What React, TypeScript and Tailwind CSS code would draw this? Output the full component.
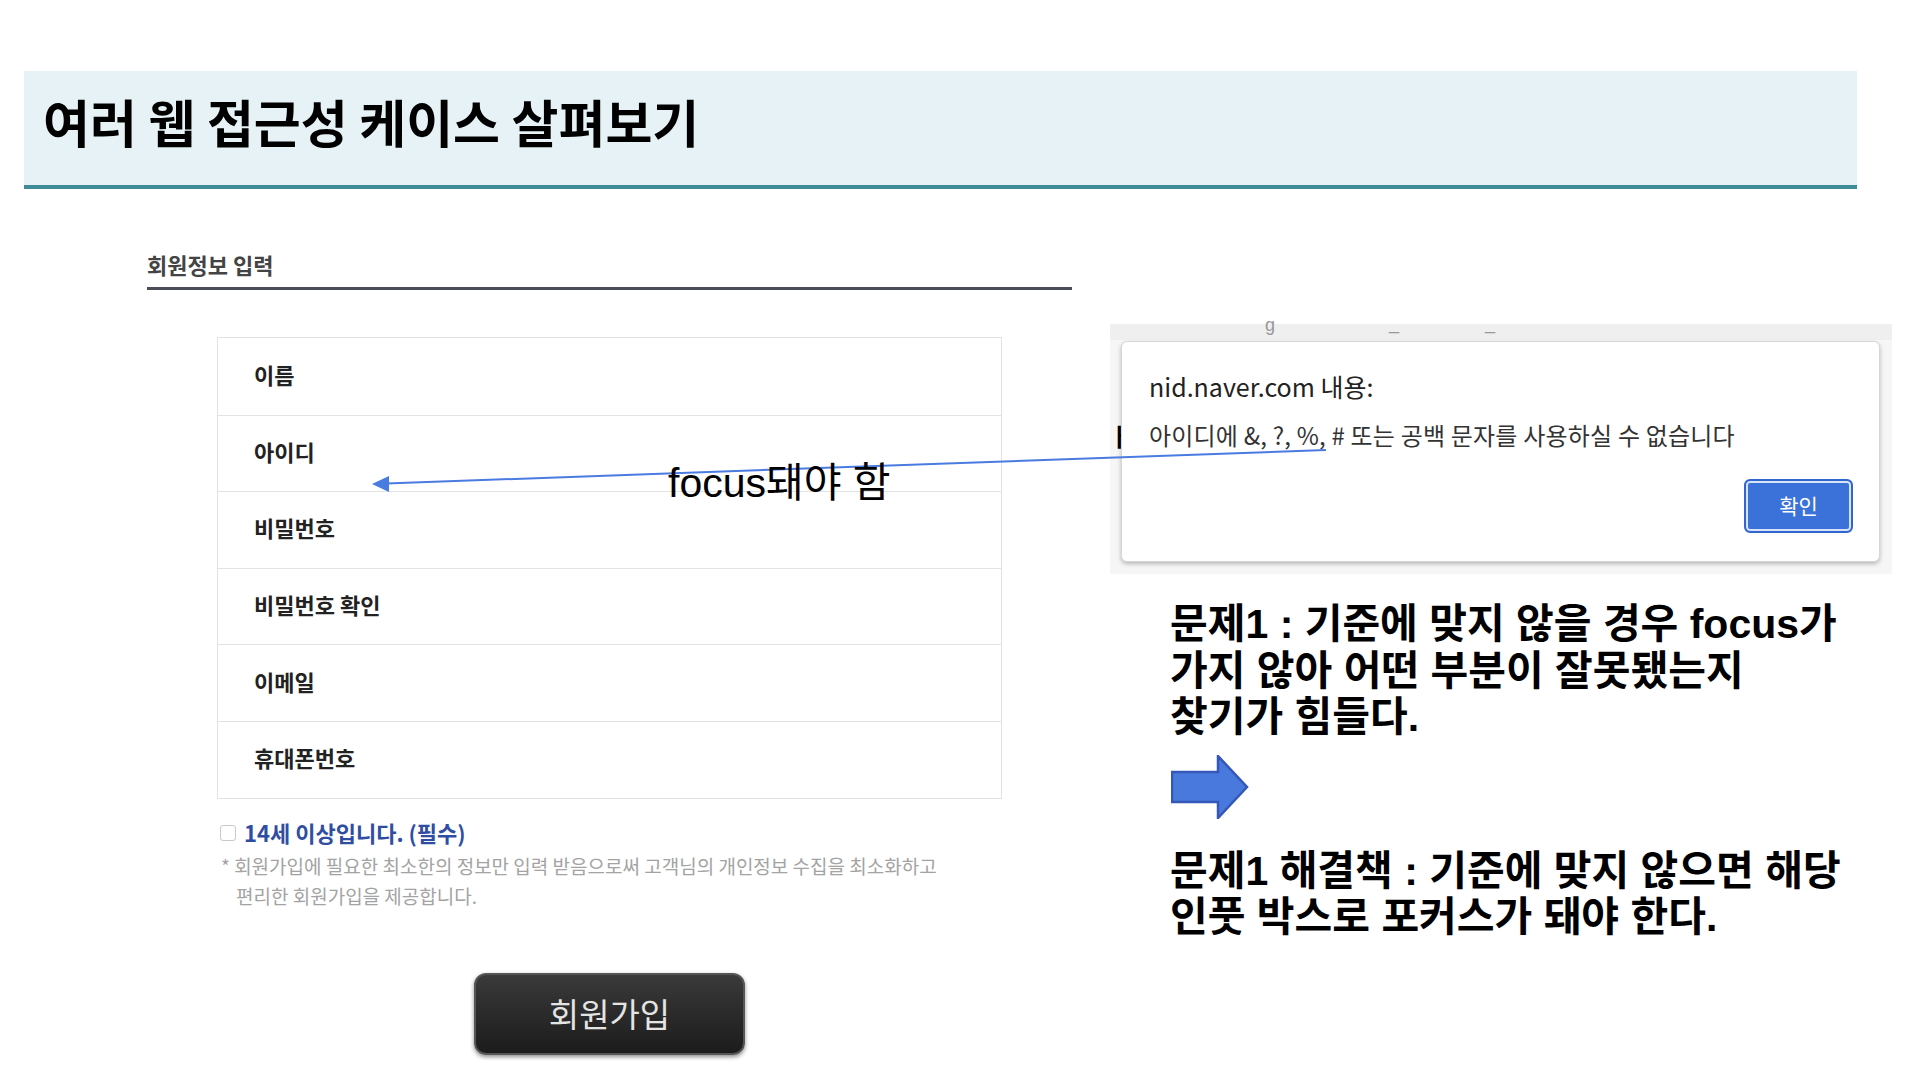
import React from 'react';

const fields = ['이름', '아이디', '비밀번호', '비밀번호 확인', '이메일', '휴대폰번호'];

const sans = "font-['Liberation_Sans','Noto_Sans_CJK_KR',sans-serif]";
const cjk = "font-['Noto_Sans_CJK_KR',sans-serif]";

export default function App() {
  return (
    <div className={`relative w-[1916px] h-[1072px] overflow-hidden bg-white ${sans}`}>
      {/* slide title */}
      <div className="mt-[71px] ml-[24px] w-[1833px] h-[118px] bg-[#e6f2f5] border-b-4 border-[#3f8c98] pl-[19px] pt-[21px]">
        <h1 className={`${cjk} text-[51px] leading-[58px] font-bold text-black`}>
          여러 웹 접근성 케이스 살펴보기
        </h1>
      </div>

      <div className="flex">
        {/* left: signup form capture */}
        <div className={`ml-[147px] w-[925px] ${cjk}`}>
          <div className="pt-[60px] pb-[8px] border-b-[3px] border-[#4b4e58]">
            <h2 className="text-[22px] leading-[30px] font-bold text-[#444]">회원정보 입력</h2>
          </div>

          <div className="ml-[70px] w-[785px]">
            <ul className="mt-[47px] border border-[#e3e3e5]">
              {fields.map((f, i) => (
                <li
                  key={f}
                  className={`h-[76.6px] flex items-center pl-[36px] pb-[4px] ${i > 0 ? 'border-t border-[#e3e3e5]' : ''}`}
                >
                  <span className="text-[22px] font-bold text-[#222]">{f}</span>
                </li>
              ))}
            </ul>

            <label className="mt-[19px] flex items-center h-[30px]">
              <span className="ml-[3px] w-[16px] h-[16px] border border-[#c9c9c9] rounded-[3px] bg-white" />
              <span className="ml-[8px] text-[22px] font-bold text-[#2f4ea3]">
                14세 이상입니다. (필수)
              </span>
            </label>

            <div className="mt-[3px] text-[19px] leading-[30px] text-[#a3a3a3]">
              <p className="ml-[4px]">* 회원가입에 필요한 최소한의 정보만 입력 받음으로써 고객님의 개인정보 수집을 최소화하고</p>
              <p className="ml-[19px]">편리한 회원가입을 제공합니다.</p>
            </div>

            <div className="mt-[62px] flex justify-center">
              <button className="w-[271px] h-[82px] rounded-[12px] bg-gradient-to-b from-[#3a3a3a] to-[#1c1c1c] shadow-[0_2px_4px_rgba(0,0,0,0.45)] border-2 border-[#555] text-[33px] text-[#e4e4e4]">
                회원가입
              </button>
            </div>
          </div>
        </div>

        {/* right: alert capture + notes */}
        <div className="ml-[38px] w-[782px]">
          <div className="relative mt-[135px] h-[250px] bg-[#f6f6f6] pt-[17px] pl-[11px]">
            <div className="absolute top-0 left-0 right-0 h-[16px] bg-[#efefef]">
              <span className="absolute left-[155px] top-[-12px] text-[18px] text-[#999]">g</span>
              <span className="absolute left-[279px] top-[-14px] text-[18px] text-[#999]">_</span>
              <span className="absolute left-[375px] top-[-14px] text-[18px] text-[#999]">_</span>
            </div>
            <span className={`absolute left-[-1px] top-[94px] text-[24px] font-bold text-black ${cjk}`}>ㅏ</span>
            <div className={`relative w-[759px] h-[221px] bg-white rounded-[6px] border border-[#d6d6d6] shadow-[0_2px_4px_rgba(0,0,0,0.25)] pl-[27px] pr-[26px] pt-[28px] ${cjk}`}>
              <p className="text-[25px] leading-[32px] text-[#222]">nid.naver.com 내용:</p>
              <p className="mt-[17px] text-[24px] leading-[32px] text-[#333] tracking-[0.2px]">
                아이디에 &amp;, ?, %, # 또는 공백 문자를 사용하실 수 없습니다
              </p>
              <div className="mt-[28px] flex justify-end">
                <button className="w-[109px] h-[54px] rounded-[6px] bg-[#3a72da] border-2 border-[#2f66d0] ring-2 ring-inset ring-white/80 text-[21px] text-white">
                  확인
                </button>
              </div>
            </div>
          </div>

          <div className="ml-[60px] mt-[27px] text-[41px] leading-[46.5px] font-bold text-black">
            <p>문제1 : 기준에 맞지 않을 경우 focus가</p>
            <p>가지 않아 어떤 부분이 잘못됐는지</p>
            <p>찾기가 힘들다.</p>
          </div>

          <svg className="ml-[61px] mt-[14px]" width="78" height="64" viewBox="0 0 78 64">
            <path d="M1 17 H47 V1 L76 32 L47 63 V47 H1 Z" fill="#4a79dd" stroke="#3558b8" strokeWidth="2.5" strokeLinejoin="miter" />
          </svg>

          <div className="ml-[60px] mt-[29px] text-[41px] leading-[46.5px] font-bold text-black">
            <p>문제1 해결책 : 기준에 맞지 않으면 해당</p>
            <p>인풋 박스로 포커스가 돼야 한다.</p>
          </div>
        </div>
      </div>

      {/* annotation pointer */}
      <svg className="absolute left-0 top-0 pointer-events-none" width="1916" height="1072">
        <line x1="1326" y1="450" x2="386" y2="483.5" stroke="#4a7be0" strokeWidth="2" />
        <polygon points="372,484 389,476 389,492" fill="#4a7be0" />
      </svg>
      <span className="absolute left-[668px] top-[459px] text-[41px] leading-[48px] text-black">
        focus돼야 함
      </span>
    </div>
  );
}
